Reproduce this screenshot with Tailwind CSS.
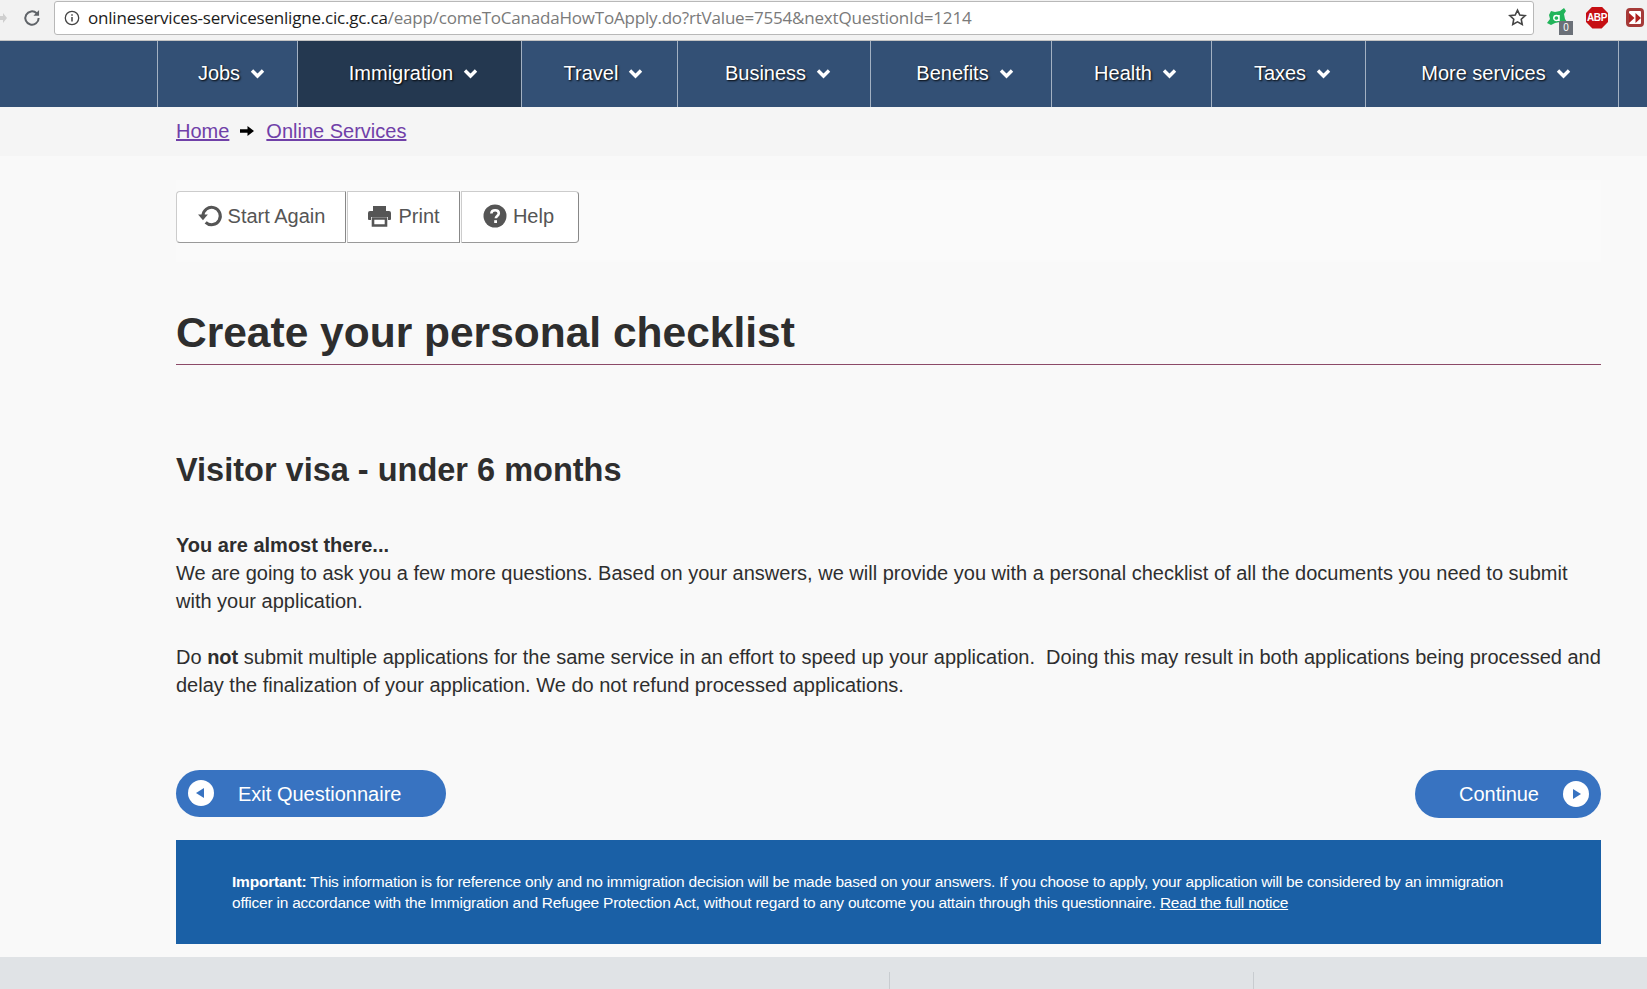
<!DOCTYPE html>
<html lang="en">
<head>
  <meta charset="UTF-8" />
  <title>Create your personal checklist</title>
  <script src="https://cdn.jsdelivr.net/npm/@tailwindcss/browser@4"></script>
</head>
<body class="bg-[#f9f9f9] text-[#2e2e2e] font-['Liberation_Sans',Arial,sans-serif] h-[989px] overflow-hidden flex flex-col">

  <!-- BROWSER BAR -->
  <div class="h-[41px] bg-[#f2f2f2] border-b border-[#c4c4c4] flex items-center pb-[5px] shrink-0">
    <div class="w-[21px] flex justify-start">
      <svg width="7" height="12" viewBox="0 0 7 12"><path d="M0 4h3V1l4 5-4 5V8H0z" fill="#cfcfcf"/></svg>
    </div>
    <svg width="20" height="20" viewBox="0 0 24 24" class="ml-[1px]"><path d="M20 12a8 8 0 1 1-2.4-5.7" fill="none" stroke="#5f6368" stroke-width="2.4"/><path d="M20.5 2.5v6.8h-6.8z" fill="#5f6368"/></svg>
    <div class="ml-[12px] w-[1480px] h-[34px] bg-white border border-[#b8b8b8] rounded-[3px] flex items-center pl-[9px] pr-[6px]">
      <svg width="16" height="16" viewBox="0 0 16 16"><circle cx="8" cy="8" r="6.7" fill="none" stroke="#444" stroke-width="1.3"/><path d="M8 7v4.5M8 4.2v1.6" stroke="#444" stroke-width="1.5"/></svg>
      <div class="ml-[8px] text-[17px] tracking-[-0.2px] text-[#7a7a7a] font-['Open_Sans',sans-serif] whitespace-nowrap"><span class="text-[#1c1c1c]">onlineservices-servicesenligne.cic.gc.ca</span>/eapp/comeToCanadaHowToApply.do?rtValue=7554&amp;nextQuestionId=1214</div>
      <svg width="19" height="19" viewBox="0 0 24 24" class="ml-auto"><path d="M12 2.6l2.9 6.2 6.800.8-5 4.600 1.300 6.700-6-3.400-6 3.400 1.300-6.700-5-4.600 6.800-.8z" fill="none" stroke="#444" stroke-width="2"/></svg>
    </div>
    <div class="relative ml-[12px] w-[26px] h-[26px]">
      <svg width="22" height="20" viewBox="0 0 22 20" class="mt-[3px]"><path d="M5 3l4 1 5-1 4-3 2 3-2 3 1 5 2 3-3 3-4-3-5 1-4 2-4-2 3-4-1-4z" fill="#21b45a"/><path d="M13 7v6M13 10a2.600 2.600 0 1 1-5.200 0 2.600 2.600 0 0 1 5.200 0z" fill="none" stroke="#fff" stroke-width="1.500"/></svg>
      <span class="absolute left-[13px] top-[16px] w-[14px] h-[14px] bg-[#6b7078] text-white text-[10px] leading-[14px] text-center">0</span>
    </div>
    <div class="ml-[14px] w-[22px] h-[22px] bg-[#c60f13] text-white text-[10px] leading-[22px] tracking-[-0.4px] font-bold text-center [clip-path:polygon(29%_0,71%_0,100%_29%,100%_71%,71%_100%,29%_100%,0_71%,0_29%)]">ABP</div>
    <div class="ml-[18px] w-[18px] h-[19px] bg-white border-[3px] border-[#a53a38] rounded-[4px] flex items-center justify-center shrink-0">
      <svg width="12" height="10" viewBox="0 0 12 10"><path d="M0 0l5.500 5-5.500 5zM6.500 0l5.500 5-5.500 5z" fill="#b0201f"/></svg>
    </div>
  </div>

  <!-- MAIN NAV -->
  <nav class="h-[66px] bg-[#335075] flex pl-[157px] text-white text-[20px] shrink-0 [text-shadow:1px_1px_2px_#000]">
    <a class="w-[140px] border-l border-[#a3b1c2] flex items-center justify-center gap-[10px] pl-[8px] pb-[2px]">Jobs <svg width="15" height="12" viewBox="0 0 15 12"><path d="M2 3.500l5.500 5.500 5.500-5.500" fill="none" stroke="#fff" stroke-width="3.400"/></svg></a>
    <a class="w-[224px] border-l border-[#a3b1c2] bg-[#243850] flex items-center justify-center gap-[10px] pl-[8px] pb-[2px]">Immigration <svg width="15" height="12" viewBox="0 0 15 12"><path d="M2 3.500l5.500 5.500 5.500-5.500" fill="none" stroke="#fff" stroke-width="3.400"/></svg></a>
    <a class="w-[156px] border-l border-[#a3b1c2] flex items-center justify-center gap-[10px] pl-[8px] pb-[2px]">Travel <svg width="15" height="12" viewBox="0 0 15 12"><path d="M2 3.500l5.500 5.500 5.500-5.500" fill="none" stroke="#fff" stroke-width="3.400"/></svg></a>
    <a class="w-[193px] border-l border-[#a3b1c2] flex items-center justify-center gap-[10px] pl-[8px] pb-[2px]">Business <svg width="15" height="12" viewBox="0 0 15 12"><path d="M2 3.500l5.500 5.500 5.500-5.500" fill="none" stroke="#fff" stroke-width="3.400"/></svg></a>
    <a class="w-[181px] border-l border-[#a3b1c2] flex items-center justify-center gap-[10px] pl-[8px] pb-[2px]">Benefits <svg width="15" height="12" viewBox="0 0 15 12"><path d="M2 3.500l5.500 5.500 5.500-5.500" fill="none" stroke="#fff" stroke-width="3.400"/></svg></a>
    <a class="w-[160px] border-l border-[#a3b1c2] flex items-center justify-center gap-[10px] pl-[8px] pb-[2px]">Health <svg width="15" height="12" viewBox="0 0 15 12"><path d="M2 3.500l5.500 5.500 5.500-5.500" fill="none" stroke="#fff" stroke-width="3.400"/></svg></a>
    <a class="w-[154px] border-l border-[#a3b1c2] flex items-center justify-center gap-[10px] pl-[8px] pb-[2px]">Taxes <svg width="15" height="12" viewBox="0 0 15 12"><path d="M2 3.500l5.500 5.500 5.500-5.500" fill="none" stroke="#fff" stroke-width="3.400"/></svg></a>
    <a class="w-[254px] border-x border-[#a3b1c2] flex items-center justify-center gap-[10px] pl-[8px] pb-[2px]">More services <svg width="15" height="12" viewBox="0 0 15 12"><path d="M2 3.500l5.500 5.500 5.500-5.500" fill="none" stroke="#fff" stroke-width="3.400"/></svg></a>
  </nav>

  <!-- BREADCRUMB -->
  <div class="h-[49px] bg-[#f5f5f5] pl-[176px] pb-[2px] flex items-center gap-[11px] text-[20px] text-[#7040a8] shrink-0">
    <a class="underline">Home</a>
    <svg width="15" height="12" viewBox="0 0 15 12"><path d="M0 4.200h7.500V1L14 6l-6.500 5V7.800H0z" fill="#000"/></svg>
    <a class="underline">Online Services</a>
  </div>

  <!-- CONTENT -->
  <main class="pl-[176px] pr-[46px] pt-[24px] flex-1">
    <div class="h-[82px] bg-[#fafafa] pt-[11px] flex">
      <button class="h-[52px] w-[170px] pb-[2px] bg-white border border-[#ccc] border-b-[#999] border-r-[#888] rounded-l-[4px] flex items-center justify-center gap-[5px] text-[20px] text-[#555]">
        <svg width="26" height="26" viewBox="0 0 24 24"><path d="M5.500 12a8 8 0 1 1 2.500 5.800" fill="none" stroke="#555" stroke-width="2.800"/><path d="M1 10.500h9L5.500 16z" fill="#555"/></svg>
        Start Again
      </button>
      <button class="h-[52px] w-[113px] pb-[2px] ml-[1px] bg-white border border-[#ccc] border-b-[#999] border-r-[#888] flex items-center justify-center gap-[6px] text-[20px] text-[#555]">
        <svg width="25" height="22" viewBox="0 0 25 22"><path d="M6 1h13v5H6zM1 8a2 2 0 0 1 2-2h19a2 2 0 0 1 2 2v6a1 1 0 0 1-1 1h-2v-3H4v3H2a1 1 0 0 1-1-1z" fill="#555"/><path d="M6 13.500h13v7H6z" fill="#fff" stroke="#555" stroke-width="2.600"/></svg>
        Print
      </button>
      <button class="h-[52px] w-[118px] pb-[2px] pr-[3px] ml-[1px] bg-white border border-[#ccc] border-b-[#999] border-r-[#888] rounded-r-[4px] flex items-center justify-center gap-[6px] text-[20px] text-[#555]">
        <svg width="24" height="24" viewBox="0 0 24 24"><circle cx="12" cy="12" r="11.500" fill="#555"/><path d="M8.300 9.500c.2-2.200 1.800-3.300 3.800-3.300 2.200 0 3.700 1.300 3.700 3.100 0 2.600-3 2.700-3 5" fill="none" stroke="#fff" stroke-width="2.600"/><rect x="11.200" y="16.200" width="2.800" height="2.800" fill="#fff"/></svg>
        Help
      </button>
    </div>

    <h1 class="mt-[45px] h-[58px] border-b border-[#8c4a68] text-[42.500px] leading-[52px] font-bold text-[#2e2e2e]">Create your personal checklist</h1>
    <h2 class="mt-[83px] text-[32.500px] leading-[44px] font-bold">Visitor visa - under 6 months</h2>

    <div class="mt-[40px] text-[20px] leading-[27.800px]">
      <p class="font-bold">You are almost there...</p>
      <p>We are going to ask you a few more questions. Based on your answers, we will provide you with a personal checklist of all the documents you need to submit with your application.</p>
      <p class="mt-[29px]">Do <b>not</b> submit multiple applications for the same service in an effort to speed up your application.&nbsp; Doing this may result in both applications being processed and delay the finalization of your application. We do not refund processed applications.</p>
    </div>

    <div class="mt-[70px] flex justify-between items-start">
      <a class="h-[47px] w-[270px] bg-[#3873c1] rounded-full flex items-center pl-[12px] text-white text-[20px]">
        <svg width="26" height="26" viewBox="0 0 26 26"><circle cx="13" cy="13" r="13" fill="#fff"/><path d="M16 8v10l-8-5z" fill="#3873c1"/></svg>
        <span class="ml-[24px] mt-[1px]">Exit Questionnaire</span>
      </a>
      <a class="h-[48px] w-[186px] bg-[#3873c1] rounded-full flex items-center justify-end pr-[12px] text-white text-[20px]">
        <span class="mr-[24px]">Continue</span>
        <svg width="26" height="26" viewBox="0 0 26 26"><circle cx="13" cy="13" r="13" fill="#fff"/><path d="M10 8v10l8-5z" fill="#3873c1"/></svg>
      </a>
    </div>

    <div class="mt-[22px] h-[104px] bg-[#1a60a6] pl-[56px] pr-[90px] pt-[31px] text-white text-[15.500px] leading-[21px] tracking-[-0.22px]">
      <b>Important:</b> This information is for reference only and no immigration decision will be made based on your answers. If you choose to apply, your application will be considered by an immigration officer in accordance with the Immigration and Refugee Protection Act, without regard to any outcome you attain through this questionnaire. <a class="underline">Read the full notice</a>
    </div>
  </main>

  <!-- FOOTER -->
  <footer class="h-[32px] bg-[#e0e3e6] pt-[15px] pl-[889px] flex shrink-0">
    <div class="w-[365px] border-x border-[#c8ccd0] h-[17px]"></div>
  </footer>
</body>
</html>
